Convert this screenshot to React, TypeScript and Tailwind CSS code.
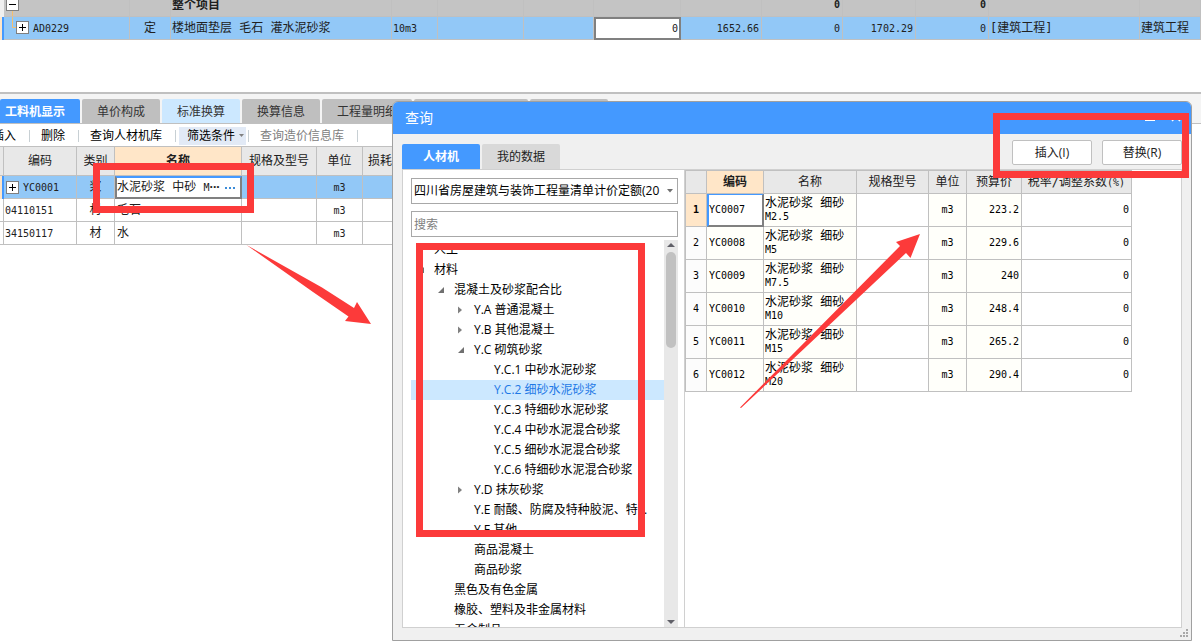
import React, { useState } from "react";

interface TreeItem {
  label: string;
  level: number;
  state?: "open" | "closed";
}

interface Material {
  code: string;
  name: string;
  spec: string;
  unit: string;
  price: string;
  tax: string;
}

const treeItems: TreeItem[] = [
  { label: "人工", level: 1 },
  { label: "材料", level: 1, state: "open" },
  { label: "混凝土及砂浆配合比", level: 2, state: "open" },
  { label: "Y.A 普通混凝土", level: 3, state: "closed" },
  { label: "Y.B 其他混凝土", level: 3, state: "closed" },
  { label: "Y.C 砌筑砂浆", level: 3, state: "open" },
  { label: "Y.C.1 中砂水泥砂浆", level: 4 },
  { label: "Y.C.2 细砂水泥砂浆", level: 4 },
  { label: "Y.C.3 特细砂水泥砂浆", level: 4 },
  { label: "Y.C.4 中砂水泥混合砂浆", level: 4 },
  { label: "Y.C.5 细砂水泥混合砂浆", level: 4 },
  { label: "Y.C.6 特细砂水泥混合砂浆", level: 4 },
  { label: "Y.D 抹灰砂浆", level: 3, state: "closed" },
  { label: "Y.E 耐酸、防腐及特种胶泥、特...", level: 3 },
  { label: "Y.F 其他", level: 3 },
  { label: "商品混凝土", level: 3 },
  { label: "商品砂浆", level: 3 },
  { label: "黑色及有色金属", level: 2 },
  { label: "橡胶、塑料及非金属材料", level: 2 },
  { label: "五金制品", level: 2 },
];

const levelPadding: Record<number, string> = {
  1: "pl-[3px]",
  2: "pl-[23px]",
  3: "pl-[43px]",
  4: "pl-[63px]",
};

const materials: Material[] = [
  { code: "YC0007", name: "M2.5", spec: "", unit: "m3", price: "223.2", tax: "0" },
  { code: "YC0008", name: "M5", spec: "", unit: "m3", price: "229.6", tax: "0" },
  { code: "YC0009", name: "M7.5", spec: "", unit: "m3", price: "240", tax: "0" },
  { code: "YC0010", name: "M10", spec: "", unit: "m3", price: "248.4", tax: "0" },
  { code: "YC0011", name: "M15", spec: "", unit: "m3", price: "265.2", tax: "0" },
  { code: "YC0012", name: "M20", spec: "", unit: "m3", price: "290.4", tax: "0" },
];

const detailTabs = [
  { label: "工料机显示", width: "w-20" },
  { label: "单价构成", width: "w-[78px]" },
  { label: "标准换算", width: "w-[78px]" },
  { label: "换算信息", width: "w-[78px]" },
  { label: "工程量明细", width: "w-[90px]" },
  { label: "反查图形工程量", width: "w-[114px]" },
  { label: "说明信息", width: "w-[78px]" },
];

const cell = "border-r border-b border-[#c0c0c0] p-0";
const mono = "font-['DejaVu_Sans_Mono','Noto_Sans_CJK_SC',monospace] text-[10px]";
const monoCjk = "font-['DejaVu_Sans_Mono','Noto_Sans_CJK_SC',monospace] text-xs";

function ExpandBox() {
  return (
    <svg width="13" height="13" viewBox="0 0 13 13" className="shrink-0">
      <rect x="0.5" y="0.5" width="12" height="12" fill="#fff" stroke="#808080" />
      <path d="M3 6.5h7M6.5 3v7" stroke="#000" />
    </svg>
  );
}

function TreeArrow({ state }: { state?: "open" | "closed" }) {
  return (
    <svg width="8" height="8" viewBox="0 0 8 8" className="shrink-0">
      {state === "open" && <path d="M8 1v6H2z" fill="#707070" />}
      {state === "closed" && <path d="M2 0.5v7l4-3.5z" fill="#808080" />}
    </svg>
  );
}

function ProjectTable() {
  const [quantity, setQuantity] = useState("0");

  return (
    <div className="flex h-10 flex-col justify-end overflow-hidden">
      <table className="w-full table-fixed border-separate border-spacing-0 text-[#202020]">
        <colgroup>
          <col className="w-1" />
          <col className="w-[126px]" />
          <col className="w-[41px]" />
          <col className="w-[221px]" />
          <col className="w-[46px]" />
          <col className="w-[86px]" />
          <col className="w-[70px]" />
          <col className="w-[87px]" />
          <col className="w-[81px]" />
          <col className="w-[81px]" />
          <col className="w-[73px]" />
          <col className="w-[73px]" />
          <col className="w-[151px]" />
          <col />
        </colgroup>
        <tbody>
          <tr className="h-6 bg-[#c4c4c4]">
            <td className="bg-[#f0f0f0] p-0"></td>
            <td className={cell}>
              <svg width="40" height="23" viewBox="0 0 40 23" className="block">
                <path d="M8.500 18v5" stroke="#f5bf6e" />
                <rect x="2.500" y="5.500" width="12" height="12" fill="#fff" stroke="#808080" />
                <path d="M5 11.500h7" stroke="#000" />
              </svg>
            </td>
            <td className={cell}></td>
            <td className={`${cell} ${monoCjk} pl-px leading-4 font-bold`}>整个项目</td>
            <td className={cell}></td>
            <td className={cell}></td>
            <td className={cell}></td>
            <td className={cell}></td>
            <td className={cell}></td>
            <td className={`${cell} ${mono} pr-0.5 text-right leading-3 font-bold`}>0</td>
            <td className={cell}></td>
            <td className={`${cell} ${mono} pr-0.5 text-right leading-3 font-bold`}>0</td>
            <td className={cell}></td>
            <td className={cell}></td>
          </tr>
          <tr className="h-[23px] bg-[#92c8f7]">
            <td className="border-r-2 border-[#4499ff] bg-[#ffe6c8] p-0"></td>
            <td className={cell}>
              <div className="flex items-center">
                <svg width="25" height="22" viewBox="0 0 25 22" className="shrink-0">
                  <path d="M8.500 0v10.500h4" fill="none" stroke="#f5bf6e" />
                  <rect x="12.500" y="4.500" width="12" height="12" fill="#fff" stroke="#808080" />
                  <path d="M15 10.500h7M18.500 7v7" stroke="#000" />
                </svg>
                <span className={`${mono} pl-1`}>AD0229</span>
              </div>
            </td>
            <td className={`${cell} ${monoCjk} text-center leading-5`}>定</td>
            <td className={`${cell} ${monoCjk} pl-px leading-5`}>楼地面垫层 毛石 灌水泥砂浆</td>
            <td className={`${cell} ${mono} pl-px`}>10m3</td>
            <td className={cell}></td>
            <td className={cell}></td>
            <td className="bg-white p-0">
              <input
                aria-label="工程量"
                value={quantity}
                onChange={(e) => setQuantity(e.target.value)}
                className={`${mono} block h-[23px] w-full border-2 border-[#808080] bg-white pr-px text-right outline-none`}
              />
            </td>
            <td className={`${cell} ${mono} pr-0.5 text-right`}>1652.66</td>
            <td className={`${cell} ${mono} pr-0.5 text-right`}>0</td>
            <td className={`${cell} ${mono} pr-0.5 text-right`}>1702.29</td>
            <td className={`${cell} ${mono} pr-0.5 text-right`}>0</td>
            <td className={`${cell} ${monoCjk} pl-px leading-5`}>[建筑工程]</td>
            <td className={`${cell} ${monoCjk} overflow-hidden pl-px leading-5 whitespace-nowrap`}>建筑工程</td>
          </tr>
        </tbody>
      </table>
    </div>
  );
}

function DetailPanel() {
  const [activeTab, setActiveTab] = useState("工料机显示");

  return (
    <section className="mt-13 border-t-2 border-[#c0c0c0]">
      <div className="flex gap-0.5 overflow-hidden border-b border-[#c0c0c0] bg-[#f4f4f4] pt-[5px]">
        {detailTabs.map((tab) => (
          <button
            key={tab.label}
            onClick={() => setActiveTab(tab.label)}
            className={`h-6 shrink-0 rounded-t-xs pt-0.5 text-xs whitespace-nowrap ${tab.width} ${
              activeTab === tab.label
                ? "bg-[#4499ff] pr-2.5 font-bold text-white"
                : tab.label === "标准换算"
                  ? "bg-[#cce8ff] text-[#333]"
                  : "bg-[#bfbfbf] text-[#333]"
            }`}
          >
            {tab.label}
          </button>
        ))}
      </div>

      {/* Toolbar */}
      <div className="flex h-[22px] items-center pt-px text-xs whitespace-nowrap">
        <button className="-ml-2 w-6 shrink-0">插入</button>
        <span className="ml-[13px] h-3 border-l border-[#c8d0d4]"></span>
        <button className="ml-[11px]">删除</button>
        <span className="ml-[13px] h-3 border-l border-[#c8d0d4]"></span>
        <button className="ml-[11px]">查询人材机库</button>
        <span className="ml-[13px] h-3 border-l border-[#c8d0d4]"></span>
        <button className="ml-[3px] flex h-[18px] items-center gap-1 bg-[#e2eaf6] pr-0.5 pl-2">
          筛选条件
          <svg width="5" height="3" viewBox="0 0 5 3">
            <path d="M0 0h5L2.500 3z" fill="#808080" />
          </svg>
        </button>
        <span className="ml-0.5 h-3 border-l border-[#c8d0d4]"></span>
        <button className="ml-[11px] text-[#808080]">查询造价信息库</button>
        <span className="ml-[13px] h-3 border-l border-[#c8d0d4]"></span>
      </div>

      <table className="w-[440px] table-fixed border-separate border-spacing-0 border-t border-[#c0c0c0] text-[#202020]">
        <colgroup>
          <col className="w-1" />
          <col className="w-[73px]" />
          <col className="w-[38px]" />
          <col className="w-[127px]" />
          <col className="w-[75px]" />
          <col className="w-[46px]" />
          <col />
        </colgroup>
        <thead>
          <tr className={`h-[29px] bg-[#e8e8e8] ${monoCjk}`}>
            <th className={cell}></th>
            <th className={`${cell} font-normal`}>编码</th>
            <th className={`${cell} font-normal`}>类别</th>
            <th className={`${cell} bg-[#ffe6c8] font-bold`}>名称</th>
            <th className={`${cell} font-normal`}>规格及型号</th>
            <th className={`${cell} font-normal`}>单位</th>
            <th className={`${cell} pl-[5px] text-left font-normal`}>损耗率</th>
          </tr>
        </thead>
        <tbody>
          <tr className="h-[23px] bg-[#92c8f7]">
            <td className="border-r-2 border-[#4499ff] bg-[#ffe6c8] p-0"></td>
            <td className={cell}>
              <div className="flex items-center gap-1 pl-0.5">
                <ExpandBox />
                <span className={mono}>YC0001</span>
              </div>
            </td>
            <td className={`${cell} ${monoCjk} text-center leading-5`}>浆</td>
            <td className="p-0">
              <div
                className={`flex h-[23px] items-center justify-between border-2 border-t-[#4499ff] border-r-[#808080] border-b-[#808080] border-l-[#808080] bg-white pr-[5px] ${monoCjk} leading-4 whitespace-nowrap`}
              >
                <span>
                  水泥砂浆 中砂 <span className="text-[10px]">M</span>
                  <span className="font-['Open_Sans',sans-serif] font-bold">···</span>
                </span>
                <button aria-label="选择材料" className="flex gap-0.5">
                  <i className="size-0.5 bg-[#3c8cd8]"></i>
                  <i className="size-0.5 bg-[#3c8cd8]"></i>
                  <i className="size-0.5 bg-[#3c8cd8]"></i>
                </button>
              </div>
            </td>
            <td className={cell}></td>
            <td className={`${cell} ${mono} text-center`}>m3</td>
            <td className={cell}></td>
          </tr>
          <tr className="h-[23px]">
            <td className={cell}></td>
            <td className={`${cell} ${mono} pl-px`}>04110151</td>
            <td className={`${cell} ${monoCjk} text-center leading-5`}>材</td>
            <td className={`${cell} ${monoCjk} pl-0.5 leading-5`}>毛石</td>
            <td className={cell}></td>
            <td className={`${cell} ${mono} text-center`}>m3</td>
            <td className={cell}></td>
          </tr>
          <tr className="h-[23px]">
            <td className={cell}></td>
            <td className={`${cell} ${mono} pl-px`}>34150117</td>
            <td className={`${cell} ${monoCjk} text-center leading-5`}>材</td>
            <td className={`${cell} ${monoCjk} pl-0.5 leading-5`}>水</td>
            <td className={cell}></td>
            <td className={`${cell} ${mono} text-center`}>m3</td>
            <td className={cell}></td>
          </tr>
        </tbody>
      </table>
    </section>
  );
}

function MaterialTree() {
  const [selected, setSelected] = useState("Y.C.2 细砂水泥砂浆");

  return (
    <div className="mt-[3px] flex min-h-0 flex-1">
      <ul className="min-w-0 flex-1 overflow-hidden">
        {treeItems.map((item) => (
          <li key={item.label}>
            <button
              onClick={() => setSelected(item.label)}
              className={`flex h-5 w-full items-center gap-2 text-left whitespace-nowrap ${levelPadding[item.level]} ${
                selected === item.label ? "bg-[#cce8ff] text-[#1e78e6]" : "text-black"
              }`}
            >
              <span className="flex w-3 justify-center">
                <TreeArrow state={item.state} />
              </span>
              {item.label}
            </button>
          </li>
        ))}
      </ul>
      <div className="flex w-3.5 flex-col items-center bg-[#e8e8e8] py-[3px]">
        <svg width="8" height="4" viewBox="0 0 8 4" className="shrink-0">
          <path d="M0 4l4-4 4 4z" fill="#606068" />
        </svg>
        <div className="mt-[5px] h-24 w-2.5 rounded-full bg-[#c1c1c1]"></div>
        <svg width="8" height="4" viewBox="0 0 8 4" className="mt-auto shrink-0">
          <path d="M0 0h8L4 4z" fill="#606068" />
        </svg>
      </div>
    </div>
  );
}

function MaterialTable() {
  const head = `${cell} font-normal`;
  return (
    <table className="w-[447px] table-fixed border-separate border-spacing-0 border-t border-l border-[#c0c0c0] text-black">
      <colgroup>
        <col className="w-[21px]" />
        <col className="w-[57px]" />
        <col className="w-[93px]" />
        <col className="w-[72px]" />
        <col className="w-[38px]" />
        <col className="w-[55px]" />
        <col />
      </colgroup>
      <thead>
        <tr className={`h-[23px] bg-[#e8e8e8] text-[#202020] ${monoCjk} leading-5 whitespace-nowrap`}>
          <th className={head}></th>
          <th className={`${cell} bg-[#ffe6c8] font-bold`}>编码</th>
          <th className={head}>名称</th>
          <th className={head}>规格型号</th>
          <th className={head}>单位</th>
          <th className={head}>预算价</th>
          <th className={head}>
            税率/调整系数<span className="text-[10px]">(%)</span>
          </th>
        </tr>
      </thead>
      <tbody>
        {materials.map((m, i) => (
          <tr key={m.code} className={`h-[33px] bg-[#fffffa] ${mono}`}>
            <td className={`${cell} text-center ${i === 0 ? "bg-[#ffe6c8] font-bold" : "bg-[#fcfcfc]"}`}>{i + 1}</td>
            {i === 0 ? (
              <td className="border-t border-r-2 border-b-2 border-l-2 border-t-[#4499ff] border-r-[#808080] border-b-[#808080] border-l-[#4499ff] bg-white p-0">
                {m.code}
              </td>
            ) : (
              <td className={`${cell} pl-0.5`}>{m.code}</td>
            )}
            <td className={`${cell} pl-px`}>
              <div className="text-xs leading-[14px]">水泥砂浆 细砂</div>
              <div className="leading-[14px]">{m.name}</div>
            </td>
            <td className={`${cell} bg-white`}>{m.spec}</td>
            <td className={`${cell} text-center`}>{m.unit}</td>
            <td className={`${cell} pr-0.5 text-right`}>{m.price}</td>
            <td className={`${cell} bg-white pr-0.5 text-right`}>{m.tax}</td>
          </tr>
        ))}
      </tbody>
    </table>
  );
}

function QueryDialog() {
  const [search, setSearch] = useState("");

  return (
    <div
      role="dialog"
      aria-label="查询"
      className="absolute top-[101px] right-[9px] left-[392px] flex h-[540px] flex-col overflow-hidden rounded-t-md border border-[#a0a0a0] bg-[#f0f0f0] text-xs"
    >
      <div className="flex h-8 shrink-0 items-center justify-between bg-[#4499ff] pr-2.5 pl-3 text-sm text-white">
        <span>查询</span>
        <div className="flex gap-4">
          <button aria-label="最小化">
            <svg width="10" height="10" viewBox="0 0 10 10">
              <path d="M0 7.500h10" stroke="#fff" />
            </svg>
          </button>
          <button aria-label="关闭">
            <svg width="10" height="10" viewBox="0 0 10 10">
              <path d="M1 0l8 8M9 0L1 8" stroke="#fff" strokeWidth="1.500" />
            </svg>
          </button>
        </div>
      </div>

      <div className="flex items-end justify-between pr-[9px] pl-[9px]">
        <div className="flex gap-0.5 pt-2.5">
          <button className="h-[25px] w-[78px] rounded-t-xs bg-[#4499ff] font-bold text-white">人材机</button>
          <button className="h-[25px] w-[78px] rounded-t-xs bg-[#d9d9d9] text-[#222]">我的数据</button>
        </div>
        <div className="mb-1 flex gap-2.5">
          <button className="h-[25px] w-20 rounded-xs border border-[#c0c0c0] bg-white text-[#222]">插入(I)</button>
          <button className="h-[25px] w-20 rounded-xs border border-[#c0c0c0] bg-white text-[#222]">替换(R)</button>
        </div>
      </div>

      <div className="mx-[9px] flex min-h-0 flex-1 border border-[#d0d0d0] bg-white">
        <div className="flex w-[282px] flex-col border-r border-[#d0d0d0] pt-2 pr-[6px] pl-2">
          <div className="relative">
            <select
              aria-label="定额库"
              className="block h-[26px] w-full appearance-none border border-[#a8a8a8] bg-white pr-4 pl-0.5 text-xs outline-none"
            >
              <option>四川省房屋建筑与装饰工程量清单计价定额(20</option>
            </select>
            <svg width="6" height="4" viewBox="0 0 6 4" className="pointer-events-none absolute top-[11px] right-[5px]">
              <path d="M0 0h6L3 3.500z" fill="#707070" />
            </svg>
          </div>
          <input
            aria-label="搜索"
            value={search}
            onChange={(e) => setSearch(e.target.value)}
            placeholder="搜索"
            className="mt-[7px] h-[26px] w-full border border-[#a8a8a8] bg-white px-0.5 outline-none placeholder:text-[#808080]"
          />
          <MaterialTree />
        </div>
        <div className="min-w-0 flex-1">
          <MaterialTable />
        </div>
      </div>

      <div className="flex h-3 shrink-0 justify-end pt-px pr-[3px]">
        <svg width="8" height="8" viewBox="0 0 8 8" fill="#a8a8a8">
          <path d="M6 0h2v2H6zM3 3h2v2H3zM6 3h2v2H6zM0 6h2v2H0zM3 6h2v2H3zM6 6h2v2H6z" />
        </svg>
      </div>
    </div>
  );
}

// Red callouts drawn on top of the windows
function Callouts() {
  return (
    <svg
      width="1201"
      height="643"
      viewBox="0 0 1201 643"
      className="pointer-events-none absolute top-0 left-0"
      aria-hidden="true"
    >
      <g fill="none" stroke="#fc3a3a" strokeWidth="7">
        <rect x="96.500" y="166.500" width="154" height="43" />
        <rect x="419.500" y="246.500" width="222" height="287" />
        <rect x="996.500" y="116.500" width="189" height="58" />
      </g>
      <g fill="#fc3a3a">
        <path d="M246.500 245L322 287.500 354 308l3-6 14 22-26-3 3.500-4.500L313 292z" />
        <path d="M740 407.500L900 246l-4-4 24-8-9.500 24-4.500-5L741 408z" />
      </g>
    </svg>
  );
}

export default function App() {
  return (
    <div className="relative min-h-screen w-full overflow-hidden bg-white font-['Open_Sans','Noto_Sans_CJK_SC',sans-serif]">
      <ProjectTable />
      <DetailPanel />
      <QueryDialog />
      <Callouts />
    </div>
  );
}
